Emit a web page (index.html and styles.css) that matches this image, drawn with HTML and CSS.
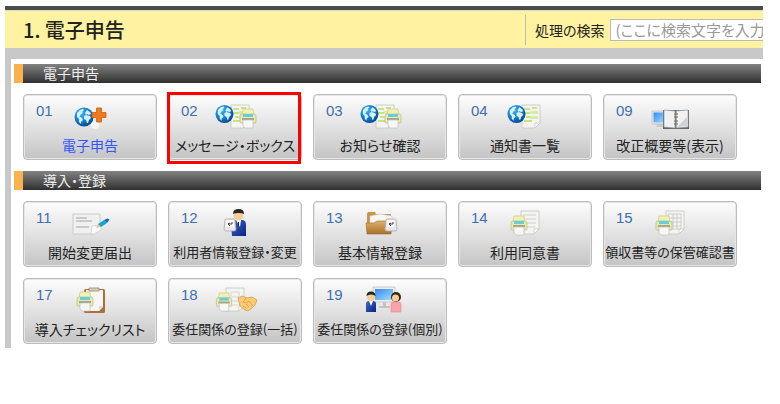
FILE: index.html
```
<!DOCTYPE html>
<html lang="ja">
<head>
    <meta charset="UTF-8">
    <meta name="viewport" content="width=device-width, initial-scale=1.0">
    <title>電子申告</title>
    <link rel="stylesheet" href="styles.css">
</head>
<body>
    <!-- shared icon parts -->
    <svg class="defs" width="0" height="0" aria-hidden="true">
        <defs>
            <radialGradient id="sea" cx="35%" cy="30%" r="75%">
                <stop offset="0" stop-color="#39b5ee"/>
                <stop offset="0.6" stop-color="#1279cb"/>
                <stop offset="1" stop-color="#07458f"/>
            </radialGradient>
            <linearGradient id="screen" x1="0" y1="0" x2="1" y2="1">
                <stop offset="0" stop-color="#2f8df5"/>
                <stop offset="1" stop-color="#a9dcff"/>
            </linearGradient>
            <linearGradient id="suit" x1="0" y1="0" x2="1" y2="1">
                <stop offset="0" stop-color="#3c68cf"/>
                <stop offset="1" stop-color="#0a237f"/>
            </linearGradient>
            <linearGradient id="leather" x1="0" y1="0" x2="0" y2="1">
                <stop offset="0" stop-color="#dfb06a"/>
                <stop offset="1" stop-color="#a9702c"/>
            </linearGradient>
            <symbol id="globe" viewBox="0 0 20 20">
                <circle cx="10" cy="10" r="9.5" fill="url(#sea)"/>
                <path d="M3 6l3-3 3-1 1 1-2 2 1 1-2 1-1 2-1 0 3 2 1 2-2 2 0 2-2-2 0-3-2-2z" fill="#d4f0f4"/>
                <path d="M13 3l3 2 1 2-2 1-2-1-1 1 4 1 1 2-2 2-1 3-1 0-1-3-2-1 0-3 2-1-1-2z" fill="#d4f0f4"/>
            </symbol>
            <symbol id="printer" viewBox="0 0 18 21">
                <path d="M4 1h10l1 7H3z" fill="#f3f1b2" stroke="#c9c98b" stroke-width=".7"/>
                <path d="M1 8q0-2 2-2h12q2 0 2 2v6q0 1-1 1H2q-1 0-1-1z" fill="#eceaa4" stroke="#b9b986" stroke-width=".7"/>
                <path d="M4 6h10v3H4z" fill="#5fd0dc"/>
                <path d="M3 10h12v2H3z" fill="#a3a58c"/>
                <path d="M4 12h10v8H6l-2-2z" fill="#f7f7f5" stroke="#bdbdbd" stroke-width=".7"/>
            </symbol>
            <symbol id="sheet" viewBox="0 0 20 25">
                <path d="M1 1h18v18l-5 5H1z" fill="#f4f5f3" stroke="#c3c6c0" stroke-width=".8"/>
                <path d="M19 19h-5v5z" fill="#fff" stroke="#bbb" stroke-width=".6"/>
            </symbol>
            <symbol id="green-sheet" viewBox="0 0 20 25">
                <use href="#sheet"/>
                <path d="M3 5h6M11 4h5M3 9h6M5 13h6M3 17h8" stroke="#c5e486" stroke-width="2"/>
                <path d="M9 7h8v3H9zM9 12h8v3H9z" fill="#d5edab"/>
            </symbol>
            <symbol id="key" viewBox="0 0 14 14">
                <path d="M3 1h8q1 0 1 1l1 9q0 2-2 2H3q-2 0-2-2l1-9q0-1 1-1z" fill="#e8e8ea" stroke="#aaa" stroke-width=".8"/>
                <path d="M3 2h8v7H3z" fill="#f8f8f8"/>
                <path d="M9 4v2H5M7 5L5 6l2 2" fill="none" stroke="#444"/>
            </symbol>
            <symbol id="print-doc" viewBox="0 0 44 28">
                <use href="#green-sheet" x="17" y="1" width="20" height="25"/>
                <use href="#globe" x="2" y="1" width="19" height="20"/>
                <use href="#printer" x="26" y="5" width="18" height="21"/>
            </symbol>
        </defs>
    </svg>

    <div class="app">
        <header class="header">
            <h1>1. 電子申告</h1>
            <form class="search">
                <label for="keyword">処理の検索</label>
                <input type="text" id="keyword" placeholder="(ここに検索文字を入力)">
            </form>
        </header>

        <main class="panel">
            <h2 class="bar">電子申告</h2>
            <div class="menu">
                <button type="button" class="tile current">
                    <span class="no">01</span>
                    <svg class="icon" viewBox="0 0 44 28" aria-hidden="true">
                        <circle cx="27" cy="22" r="4" fill="#fff" opacity=".7"/>
                        <use href="#globe" x="6" y="4" width="20" height="20"/>
                        <path d="M28.500 5h5v4.500H38v5h-4.500V19h-5v-4.500H24v-5h4.500z" fill="#ef7a1e" stroke="#c9600f" stroke-width=".8"/>
                    </svg>
                    <span class="name">電子申告</span>
                </button>
                <button type="button" class="tile marked">
                    <span class="no">02</span>
                    <svg class="icon" viewBox="0 0 44 28" aria-hidden="true"><use href="#print-doc"/></svg>
                    <span class="name">メッセージ・ボックス</span>
                </button>
                <button type="button" class="tile">
                    <span class="no">03</span>
                    <svg class="icon" viewBox="0 0 44 28" aria-hidden="true"><use href="#print-doc"/></svg>
                    <span class="name">お知らせ確認</span>
                </button>
                <button type="button" class="tile">
                    <span class="no">04</span>
                    <svg class="icon" viewBox="0 0 44 28" aria-hidden="true">
                        <use href="#green-sheet" x="18" y="1" width="20" height="25"/>
                        <use href="#globe" x="4" y="1" width="19" height="20"/>
                    </svg>
                    <span class="name">通知書一覧</span>
                </button>
                <button type="button" class="tile">
                    <span class="no">09</span>
                    <svg class="icon" viewBox="0 0 44 28" aria-hidden="true">
                        <path d="M10 20h6v4H8z" fill="#ccc"/>
                        <rect x="4" y="8" width="15" height="13" fill="#e6e6e6" stroke="#bbb" stroke-width=".7"/>
                        <rect x="5.500" y="9.500" width="12" height="10" fill="url(#screen)"/>
                        <path d="M15 7h26v19H15z" fill="#666"/>
                        <path d="M16 7l11 1v17l-11-1zM28 8l12-1v17l-12 1z" fill="#f1f1f1" stroke="#8fa3ab" stroke-width=".7"/>
                        <path d="M29 24l10-10v9z" fill="#d2d2d2"/>
                        <path d="M26 11h4M26 14h4M26 18h4M26 21h4" stroke="#765"/>
                        <path d="M28 8v17" stroke="#777" stroke-width=".8"/>
                    </svg>
                    <span class="name">改正概要等(表示)</span>
                </button>
            </div>

            <h2 class="bar">導入・登録</h2>
            <div class="menu">
                <button type="button" class="tile">
                    <span class="no">11</span>
                    <svg class="icon" viewBox="0 0 44 28" aria-hidden="true">
                        <path d="M5 4h27v14l-6 6H5z" fill="#f0f0f0" stroke="#c2c2c2" stroke-width=".8"/>
                        <path d="M8 8h11M8 11h16M8 17h13" stroke="#bcbcbc" stroke-width="1.300"/>
                        <path d="M24 16l9-1v5l-7 4h-3z" fill="#fafafa" stroke="#ccc" stroke-width=".7"/>
                        <path d="M28 18l2-4 3 3z" fill="#f1c58b"/>
                        <path d="M30 14l6-4 3 3-6 4z" fill="#18a4cd"/>
                        <path d="M36 10l3.500-1.500 2 1-2.500 3.500z" fill="#0a6ebc"/>
                    </svg>
                    <span class="name">開始変更届出</span>
                </button>
                <button type="button" class="tile">
                    <span class="no">12</span>
                    <svg class="icon" viewBox="0 0 44 28" aria-hidden="true">
                        <path d="M18 15q0-5 5-5h6q4 0 4 5v11H19z" fill="url(#suit)"/>
                        <path d="M23 10h5l-1 7z" fill="#fff"/>
                        <path d="M25 12h1v4h-1z" fill="#223"/>
                        <circle cx="25.500" cy="5.500" r="5" fill="#f6cf96"/>
                        <path d="M20 4q0-5 5.500-5T31 4q-2-1-5.500-1T20 4z" fill="#2b2622"/>
                        <use href="#key" x="10" y="8" width="14" height="14"/>
                    </svg>
                    <span class="name small">利用者情報登録・変更</span>
                </button>
                <button type="button" class="tile">
                    <span class="no">13</span>
                    <svg class="icon" viewBox="0 0 44 28" aria-hidden="true">
                        <path d="M9 4l1-2h7l1 2h15v17H9z" fill="#c8934b"/>
                        <path d="M12 6l10-2 12 2v9H12z" fill="#f8f6f2" stroke="#ccc" stroke-width=".6"/>
                        <path d="M8 13h8l3-2h15l-1 13H9z" fill="url(#leather)" stroke="#9c6a2d" stroke-width=".6"/>
                        <use href="#key" x="26" y="8" width="14" height="14"/>
                    </svg>
                    <span class="name">基本情報登録</span>
                </button>
                <button type="button" class="tile">
                    <span class="no">14</span>
                    <svg class="icon" viewBox="0 0 44 28" aria-hidden="true">
                        <use href="#sheet" x="17" y="0" width="20" height="25"/>
                        <path d="M20 5h13M20 9h13M20 13h13M24 17h8" stroke="#d0d0d0"/>
                        <use href="#printer" x="7" y="5" width="18" height="21"/>
                    </svg>
                    <span class="name">利用同意書</span>
                </button>
                <button type="button" class="tile">
                    <span class="no">15</span>
                    <svg class="icon" viewBox="0 0 44 28" aria-hidden="true">
                        <use href="#sheet" x="17" y="0" width="20" height="25"/>
                        <path d="M20 4h13v15H20zM20 8h13M20 12h13M20 16h13M25 4v15M29 4v15" fill="none" stroke="#ccc"/>
                        <use href="#printer" x="7" y="5" width="18" height="21"/>
                    </svg>
                    <span class="name small">領収書等の保管確認書</span>
                </button>
                <button type="button" class="tile">
                    <span class="no">17</span>
                    <svg class="icon" viewBox="0 0 44 28" aria-hidden="true">
                        <rect x="16" y="2" width="21" height="24" rx="1.500" fill="#a9703c"/>
                        <path d="M18 3h17v17l-4 4H18z" fill="#f6f6f6"/>
                        <path d="M35 19h-4v5z" fill="#ddd"/>
                        <path d="M21 1h10v3H21z" fill="#ddd0b5" stroke="#8c7a62" stroke-width=".7"/>
                        <use href="#printer" x="8" y="4" width="18" height="21"/>
                    </svg>
                    <span class="name">導入チェックリスト</span>
                </button>
                <button type="button" class="tile">
                    <span class="no">18</span>
                    <svg class="icon" viewBox="0 0 44 28" aria-hidden="true">
                        <use href="#sheet" x="12" y="0" width="20" height="25"/>
                        <path d="M18 5h8v5h-8zM17 14h9M17 18h9" fill="none" stroke="#d4d4d4"/>
                        <use href="#printer" x="2" y="5" width="18" height="20"/>
                        <path d="M25 11l4-2 5 2 5-1 5 3-2 5-3 3-4 3-3-1-5-4z" fill="#fbcb75" stroke="#d39a48" stroke-width=".8"/>
                        <path d="M33 11l-3 4 3 1 3-2 4 5M30 19l3 2M33 17l3 3" fill="none" stroke="#d99f4b" stroke-width=".9"/>
                    </svg>
                    <span class="name small">委任関係の登録(一括)</span>
                </button>
                <button type="button" class="tile">
                    <span class="no">19</span>
                    <svg class="icon" viewBox="0 0 44 28" aria-hidden="true">
                        <rect x="15" y="0" width="22" height="15" fill="#ededed" stroke="#bbb" stroke-width=".7"/>
                        <rect x="17" y="2" width="18" height="11" fill="url(#screen)"/>
                        <path d="M25 15h3v4h4v2H21v-2h4z" fill="#c3c3c3"/>
                        <path d="M8 17q0-3 3-3h4q3 0 3 3v8H8z" fill="url(#suit)"/>
                        <path d="M11 14h4l-2 5z" fill="#fff"/>
                        <circle cx="13" cy="10" r="4" fill="#f6cf96"/>
                        <path d="M8.500 9q0-4.500 4.500-4.500T17.500 9q-2-1.500-4.500-1.500T8.500 9z" fill="#2b2622"/>
                        <circle cx="38" cy="10" r="5" fill="#3a2416"/>
                        <circle cx="37.500" cy="11" r="3.500" fill="#f6cf96"/>
                        <path d="M33 17q0-2 3-2h4q3 0 3 2v8H33z" fill="#fba3a8" stroke="#e5868c" stroke-width=".6"/>
                    </svg>
                    <span class="name small">委任関係の登録(個別)</span>
                </button>
            </div>
        </main>
    </div>
</body>
</html>
```
FILE: styles.css
```
* {
    box-sizing: border-box;
}
body {
    margin: 0;
    padding: 6px 17px 0 5px;
    background-color: #fff;
    color: #222;
    font-family: "Noto Sans CJK JP", sans-serif;
    font-feature-settings: "palt";
    font-size: 14px;
}
.defs {
    position: absolute;
}
.app {
    overflow: hidden;
    border-top: 4px solid #4b4b4b;
    background-color: #c8c8c8;
}
.header {
    display: flex;
    align-items: center;
    justify-content: space-between;
    height: 38px;
    padding-left: 18px;
    border-top: 1px solid #d8d8d8;
    background-color: #fff2a0;
}
.header h1 {
    margin: 0;
    font-size: 20px;
    font-weight: 500;
    line-height: 28px;
    white-space: nowrap;
}
.search {
    display: flex;
    flex: 0 0 238px;
    align-items: center;
    gap: 5px;
    min-width: 0;
    height: 30px;
    padding-left: 9px;
    border-left: 1px solid #bbb;
    white-space: nowrap;
}
/* the box runs on past the right edge of the window */
.search input {
    flex: 0 0 180px;
    height: 22px;
    padding: 0 5px;
    border: 1px solid #bbb;
    background-color: #fff;
    font: inherit;
    font-size: 15px;
    font-feature-settings: inherit;
}
.search input::placeholder {
    color: #999;
}
.panel {
    margin: 11px 0 0 6px;
    padding: 5px 2px 0 3px;
    background-color: #fff;
}
.bar {
    height: 19px;
    margin: 0;
    padding-left: 20px;
    border-left: 9px solid #f9b24c;
    background: linear-gradient(#828282, #303030);
    color: #eee;
    font-size: 14px;
    font-weight: 400;
    line-height: 18px;
}
.menu {
    display: grid;
    grid-template-columns: repeat(5, minmax(0, 134px));
    gap: 11px;
    padding: 11px 0 11px 9px;
}
.menu:last-child {
    padding-bottom: 4px;
}
.tile {
    display: grid;
    grid-template-columns: 1fr 44px 1fr;
    position: relative;
    height: 66px;
    padding: 8px 0 0;
    border: 1px solid #bcbcbc;
    border-radius: 4px;
    background: linear-gradient(#fdfdfd, #e2e2e2 50%, #c4c4c4);
    box-shadow: inset 0 0 0 1px #e6e6e6;
    color: #222;
    font: inherit;
    font-feature-settings: inherit;
    cursor: pointer;
}
.tile:hover {
    background: linear-gradient(#fff, #eee 50%, #d4d4d4);
}
.no {
    padding-left: 12px;
    color: #3f6fb0;
    font-family: "Liberation Sans", Arial, sans-serif;
    font-size: 15px;
    line-height: 16px;
    text-align: left;
}
.icon {
    width: 44px;
    height: 28px;
    overflow: visible;
}
.name {
    grid-column: 1 / -1;
    line-height: 28px;
    text-align: center;
    white-space: nowrap;
}
.name.small {
    font-size: 13px;
}
.tile.current .name {
    color: #3355ff;
}
.tile.marked::after {
    content: "";
    position: absolute;
    inset: -3px 0 -5px -2px;
    border: 3px solid #f00;
}
```
